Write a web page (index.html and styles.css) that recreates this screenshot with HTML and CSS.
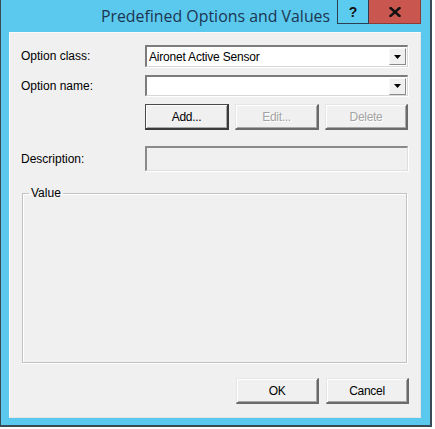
FILE: index.html
```html
<!DOCTYPE html>
<html>
<head>
<meta charset="utf-8">
<link rel="stylesheet" href="styles.css">
</head>
<body>
<div class="window">
  <div class="titlebar">
    <div class="spacer"></div>
    <div class="title">Predefined Options and Values</div>
    <div class="caption-buttons">
      <div class="cap-btn help">?</div>
      <div class="cap-btn close">
        <svg width="12" height="10" viewBox="0 0 12 10"><path d="M1.5 1 L10.5 9 M10.5 1 L1.5 9" stroke="#111" stroke-width="2.4" stroke-linecap="square"/></svg>
      </div>
    </div>
  </div>
  <div class="client">
    <div class="form">
      <div class="label">Option class:</div>
      <div class="combo"><span class="combo-text">Aironet Active Sensor</span><span class="drop"><svg width="7" height="4" viewBox="0 0 7 4"><path d="M0 0 H7 L3.5 4 Z" fill="#000"/></svg></span></div>
      <div class="label">Option name:</div>
      <div class="combo"><span class="combo-text"></span><span class="drop"><svg width="7" height="4" viewBox="0 0 7 4"><path d="M0 0 H7 L3.5 4 Z" fill="#000"/></svg></span></div>
      <div></div>
      <div class="btn-row">
        <div class="btn default w84">Add...</div>
        <div class="btn disabled w84">Edit...</div>
        <div class="btn disabled w83">Delete</div>
      </div>
      <div class="label desc-label">Description:</div>
      <div class="field desc-field"></div>
    </div>
    <fieldset class="group">
      <legend>Value</legend>
    </fieldset>
    <div class="footer">
      <div class="btn w83">OK</div>
      <div class="btn w83">Cancel</div>
    </div>
  </div>
</div>
</body>
</html>
```

FILE: styles.css
```css
html, body {
  margin: 0;
  padding: 0;
  background: #ffffff;
}
body {
  width: 435px;
  height: 429px;
  overflow: hidden;
  font-family: "Liberation Sans", Arial, sans-serif;
  font-size: 12px;
  color: #000;
}
.window {
  box-sizing: border-box;
  width: 432px;
  height: 427px;
  background: #5bc9ee;
  border-left: 1px solid #3a4a55;
  border-right: 2px solid #3a4a55;
  border-bottom: 2px solid #3a4a55;
  display: flex;
  flex-direction: column;
  padding: 0 9px 7px 8px;
}
.titlebar {
  height: 32px;
  display: grid;
  grid-template-columns: 1fr auto 1fr;
  align-items: start;
  margin: 0 -9px 0 -8px;
}
.title {
  font-family: "Open Sans", "Noto Sans", sans-serif;
  font-size: 15.9px;
  color: #1b3652;
  line-height: 20px;
  padding-top: 6px;
}
.caption-buttons {
  justify-self: end;
  display: flex;
  margin-right: 9px;
}
.cap-btn {
  box-sizing: border-box;
  height: 24px;
  display: flex;
  align-items: center;
  justify-content: center;
}
.help {
  width: 32px;
  background: #5ccbf0;
  border: 1px solid #2b3f52;
  border-top: none;
  font-family: "Liberation Sans", Arial, sans-serif;
  font-weight: bold;
  font-size: 14px;
  color: #111;
}
.close {
  width: 52px;
  background: #c9564f;
  border: 1px solid #8e3a35;
  border-top: none;
  border-left: none;
}
.client {
  flex: 1;
  background: #f0f0f0;
  border-top: 1px solid #fbfbfb;
  border-left: 1px solid #fbfbfb;
  border-right: 1px solid #e4e4e4;
  border-bottom: 1px solid #e4e4e4;
  padding: 12px 12px 0 11px;
  display: flex;
  flex-direction: column;
}
.form {
  display: grid;
  grid-template-columns: 124px 263px;
  row-gap: 8px;
  align-items: center;
}
.label {
  line-height: 14px;
}
.combo {
  box-sizing: border-box;
  height: 22px;
  background: #fff;
  border-top: 2px solid #7c7c7c;
  border-left: 2px solid #7c7c7c;
  border-right: 1px solid #d8d8d8;
  border-bottom: 1px solid #d8d8d8;
  box-shadow: 1px 1px 0 #ffffff;
  display: flex;
  align-items: center;
  justify-content: space-between;
  padding: 0 1px;
}
.combo + .label + .combo {
  height: 21px;
}
.combo-text {
  padding-left: 1px;
  letter-spacing: -0.2px;
}
.drop {
  box-sizing: border-box;
  width: 17px;
  height: 17px;
  background: #f0f0f0;
  border-top: 1px solid #fafafa;
  border-left: 1px solid #fafafa;
  border-right: 1px solid #8a8a8a;
  border-bottom: 1px solid #8a8a8a;
  display: flex;
  align-items: center;
  justify-content: center;
}
.btn-row {
  display: flex;
  gap: 6px;
}
.btn {
  box-sizing: border-box;
  height: 26px;
  background: #f0f0f0;
  border-top: 1px solid #e6e6e6;
  border-left: 1px solid #e6e6e6;
  border-right: 2px solid #6a6a6a;
  border-bottom: 2px solid #6a6a6a;
  box-shadow: inset 1px 1px 0 #ffffff, inset -1px -1px 0 #a8a8a8;
  display: flex;
  align-items: center;
  justify-content: center;
  letter-spacing: -0.3px;
}
.w84 { width: 84px; }
.w83 { width: 83px; }
.btn.default {
  border: 1px solid #4a4a4a;
  border-right: 2px solid #3a3a3a;
  border-bottom: 2px solid #3a3a3a;
}
.btn.disabled {
  color: #a3a3a3;
  text-shadow: 1px 1px 0 #ffffff;
}
.desc-label {
  margin-top: 8px;
}
.field {
  box-sizing: border-box;
  height: 25px;
  border-top: 2px solid #8a8a8a;
  border-left: 2px solid #8a8a8a;
  border-right: 1px solid #dedede;
  border-bottom: 1px solid #dedede;
  box-shadow: 1px 1px 0 #ffffff;
}
.desc-field {
  margin-top: 8px;
  background: #f0f0f0;
}
.group {
  box-sizing: border-box;
  margin: 15px 1px 0 1px;
  padding: 0;
  height: 177px;
  border: 1px solid #c2c2c2;
  box-shadow: inset 1px 1px 0 #ffffff, 1px 1px 0 #ffffff;
  min-width: 0;
}
.group legend {
  margin-left: 6px;
  padding: 0 2px;
  line-height: 14px;
}
.footer {
  margin-top: 15px;
  display: flex;
  justify-content: flex-end;
  gap: 7px;
  margin-right: -1px;
}
```
